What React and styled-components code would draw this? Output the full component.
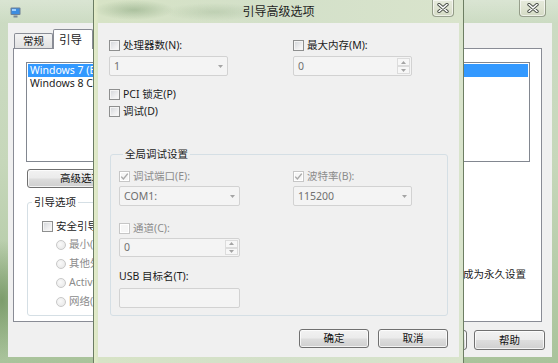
import React from 'react';
import styled, { createGlobalStyle } from 'styled-components';

const GlobalStyle = createGlobalStyle`
  html, body { margin: 0; padding: 0; }
  body {
    width: 558px; height: 363px; overflow: hidden; background: #b7cbae;
    font-family: "Noto Sans", "Noto Sans CJK SC", sans-serif;
  }
  * { box-sizing: border-box; }
`;

const Screen = styled.div`
  position: relative;
  width: 558px;
  height: 363px;
  overflow: hidden;
  font-size: 10.5px;
  line-height: 15px;
  color: #1b1b1b;
`;

/* ---------- back window (系统配置) ---------- */
const MainWindow = styled.div`
  display: flex;
  flex-direction: column;
  width: 558px;
  height: 363px;
  background:
    radial-gradient(ellipse 30px 60px at 2px 300px, rgba(80, 120, 60, 0.55), transparent),
    linear-gradient(180deg, #cddcc4 0%, #c6d7ba 45%, #a9c39b 100%);
`;

const MainTitle = styled.div`
  height: 23px;
  flex: none;
  display: flex;
  align-items: flex-start;
  justify-content: space-between;
  padding: 0 6px 0 10px;
  background: linear-gradient(180deg, rgba(255, 255, 255, 0.25), rgba(255, 255, 255, 0));
`;

const AppIcon = styled.svg`
  margin-top: 7px;
  display: block;
`;

const TitleText = styled.div`
  font-size: 12px;
  line-height: 16px;
  padding-top: 4px;
  color: #1e1e1e;
  white-space: nowrap;
`;

const CloseButton = styled.div`
  justify-self: end;
  width: ${(p) => p.$w}px;
  height: 17px;
  margin-right: ${(p) => p.$mr}px;
  border: 1px solid rgba(90, 100, 80, 0.55);
  border-top: none;
  border-radius: 0 0 4px 4px;
  background: linear-gradient(180deg, #e6eadc 0%, #dfe4d2 50%, #d3dac4 100%);
  box-shadow: inset 0 0 0 1px rgba(255, 255, 255, 0.6);
  display: flex;
  align-items: center;
  justify-content: center;
`;

const MainBody = styled.div`
  flex: 1;
  display: flex;
  padding: 0 6px 6px 8px;
`;

const MainClient = styled.div`
  flex: 1;
  background: #f0f0f0;
  display: flex;
  flex-direction: column;
  padding: 6px 0 0 5px;
`;

const TabStrip = styled.div`
  display: flex;
  align-items: flex-end;
  height: 20px;
  margin-left: 1px;
`;

const Tab = styled.div`
  position: relative;
  z-index: ${(p) => (p.$active ? 2 : 0)};
  width: ${(p) => (p.$active ? 40 : 39)}px;
  height: ${(p) => (p.$active ? 20 : 15)}px;
  margin-bottom: ${(p) => (p.$active ? 0 : 1)}px;
  border: 1px solid #898c95;
  border-bottom: none;
  border-radius: 2px 2px 0 0;
  background: ${(p) => (p.$active ? '#ffffff' : 'linear-gradient(180deg, #f3f3f3, #e2e2e2)')};
  display: flex;
  align-items: center;
  justify-content: ${(p) => (p.$active ? 'flex-start' : 'center')};
  padding-left: ${(p) => (p.$active ? 5 : 0)}px;
  font-size: ${(p) => (p.$active ? 11.5 : 10.5)}px;
`;

const TabPage = styled.div`
  width: 529px;
  height: 274px;
  margin-top: -1px;
  background: #ffffff;
  border: 1px solid #898c95;
  padding: 13px 15px 0 12px;
  display: flex;
  flex-direction: column;
`;

const ListBox = styled.div`
  width: 504px;
  height: 100px;
  border: 1px solid #828790;
  padding: 1px;
  background: #fff;
`;

const ListRow = styled.div`
  height: 13px;
  line-height: 13px;
  padding-left: 2px;
  white-space: nowrap;
  background: ${(p) => (p.$selected ? '#3399ff' : 'transparent')};
  color: ${(p) => (p.$selected ? '#ffffff' : '#1b1b1b')};
`;

const LowerArea = styled.div`
  display: flex;
  justify-content: space-between;
  margin-top: 7px;
`;

const LeftColumn = styled.div`
  display: flex;
  flex-direction: column;
  margin-left: 1px;
`;

const RightColumn = styled.div`
  padding-top: 98px;
`;

const PushButton = styled.div`
  width: ${(p) => p.$w || 70}px;
  height: ${(p) => p.$h || 19}px;
  border: 1px solid #707070;
  border-radius: 3px;
  background: linear-gradient(180deg, #f2f2f2 0%, #ebebeb 48%, #dddddd 52%, #cfcfcf 100%);
  box-shadow: inset 0 0 0 1px rgba(255, 255, 255, 0.75);
  display: flex;
  align-items: center;
  justify-content: center;
  color: #111;
  white-space: nowrap;
`;

const GroupBox = styled.fieldset`
  margin: ${(p) => p.$mt || 0}px 0 0 ${(p) => p.$ml || 0}px;
  padding: ${(p) => p.$pt || 0}px 0 ${(p) => p.$pb || 0}px ${(p) => p.$pl || 0}px;
  width: ${(p) => p.$w}px;
  min-width: 0;
  border: 1px solid #d5dfe5;
  border-radius: 3px;
`;

const Legend = styled.legend`
  margin-left: 4px;
  padding: 0 2px;
  line-height: 15px;
  font-size: 10.5px;
  color: #1b1b1b;
`;

const BootOptions = styled.div`
  display: flex;
  flex-direction: column;
  padding-left: 14px;
`;

const RadioList = styled.div`
  display: flex;
  flex-direction: column;
  padding-left: 14px;
`;

const RadioRow = styled.div`
  display: flex;
  align-items: center;
  gap: 3px;
  height: 19px;
  color: #8c8c8c;
  white-space: nowrap;
`;

const Radio = styled.span`
  width: 10px;
  height: 10px;
  border-radius: 50%;
  border: 1px solid #c8c8c8;
  background: radial-gradient(circle at 40% 40%, #fafafa, #e4e4e4);
  flex: none;
`;

const MainButtons = styled.div`
  display: flex;
  justify-content: flex-end;
  gap: 7px;
  margin-top: 8px;
  padding-right: 7px;
`;

/* ---------- front dialog (引导高级选项) ---------- */
const Dialog = styled.div`
  position: absolute;
  left: 93px;
  top: 0;
  width: 371px;
  height: 363px;
  display: flex;
  flex-direction: column;
  padding: 0 4px 6px;
  border-left: 1px solid rgba(70, 90, 65, 0.75);
  border-right: 1px solid rgba(70, 90, 65, 0.75);
  background:
    radial-gradient(ellipse 40px 10px at 40px 10px, rgba(130, 160, 120, 0.5), transparent),
    radial-gradient(ellipse 50px 9px at 120px 12px, rgba(150, 175, 140, 0.35), transparent),
    linear-gradient(90deg, #e4ecc8 0px, #d7e3c6 5px, #d3e0c9 50%, #d9e4cc 100%);
`;

const DialogTitle = styled.div`
  height: 23px;
  flex: none;
  display: grid;
  grid-template-columns: 1fr auto 1fr;
  align-items: start;
`;

const DialogClient = styled.div`
  flex: 1;
  background: #f0f0f0;
  display: flex;
  flex-direction: column;
  padding: 15px 11px 0 11px;
`;

const TwoCol = styled.div`
  display: grid;
  grid-template-columns: ${(p) => p.$c1}px ${(p) => p.$c2}px;
  column-gap: ${(p) => p.$gap}px;
  row-gap: ${(p) => p.$rg || 0}px;
  margin-top: ${(p) => p.$mt || 0}px;
`;

const CheckRow = styled.div`
  display: flex;
  align-items: center;
  gap: 3px;
  height: ${(p) => p.$h || 15}px;
  margin-top: ${(p) => p.$mt || 0}px;
  color: ${(p) => (p.$disabled ? '#8c8c8c' : '#1b1b1b')};
  white-space: nowrap;
`;

const Box = styled.span`
  width: 11px;
  height: 11px;
  flex: none;
  border: 1px solid ${(p) => (p.$disabled ? '#c6c6c6' : '#8e8f8f')};
  background: ${(p) =>
    p.$disabled ? '#f6f6f6' : 'linear-gradient(135deg, #d2d5d9 0%, #eeeeef 60%, #fbfbfb 100%)'};
  box-shadow: inset 0 0 0 1px ${(p) => (p.$disabled ? '#ffffff' : '#f4f4f4')};
  display: flex;
  align-items: center;
  justify-content: center;
`;

const Field = styled.div`
  display: flex;
  align-items: center;
  height: ${(p) => p.$h || 20}px;
  border: 1px solid #d2d2d2;
  border-radius: 2px;
  background: #f4f4f4;
  color: #707070;
`;

const FieldText = styled.span`
  flex: 1;
  padding-left: 4px;
`;

const DropArrow = styled.span`
  width: 14px;
  display: flex;
  justify-content: center;
`;

const SpinButtons = styled.div`
  display: flex;
  flex-direction: column;
  align-self: stretch;
  width: 13px;
  margin: 1px;
`;

const SpinButton = styled.span`
  flex: 1;
  border: 1px solid #dcdcdc;
  background: #f7f7f7;
  display: flex;
  align-items: center;
  justify-content: center;
`;

const Label = styled.div`
  height: 15px;
  margin-top: ${(p) => p.$mt || 0}px;
  color: #1b1b1b;
`;

const DialogButtons = styled.div`
  display: flex;
  justify-content: flex-end;
  gap: 9px;
  margin-top: 13px;
`;

const Tri = ({ up }) => (
  <svg width="5" height="3" viewBox="0 0 5 3">
    <path d={up ? 'M0 3 L2.5 0 L5 3 Z' : 'M0 0 L5 0 L2.5 3 Z'} fill="#a4a4a4" />
  </svg>
);

const CheckMark = () => (
  <svg width="9" height="9" viewBox="0 0 9 9">
    <path d="M1.2 4.6 L3.4 7 L7.8 1.6" fill="none" stroke="#a9a9a9" strokeWidth="1.4" />
  </svg>
);

const Check = ({ checked, disabled, children, h, mt }) => (
  <CheckRow $disabled={disabled} $h={h} $mt={mt}>
    <Box $disabled={disabled}>{checked && <CheckMark />}</Box>
    <span>{children}</span>
  </CheckRow>
);

const Combo = ({ value, h }) => (
  <Field $h={h}>
    <FieldText>{value}</FieldText>
    <DropArrow>
      <Tri />
    </DropArrow>
  </Field>
);

const Spin = ({ value, h }) => (
  <Field $h={h}>
    <FieldText>{value}</FieldText>
    <SpinButtons>
      <SpinButton>
        <Tri up />
      </SpinButton>
      <SpinButton>
        <Tri />
      </SpinButton>
    </SpinButtons>
  </Field>
);

const CloseGlyph = () => (
  <svg width="12" height="10" viewBox="0 0 12 10">
    <path d="M2 1.5 L10 8.5 M10 1.5 L2 8.5" stroke="#4a4f48" strokeWidth="3.4" strokeLinecap="round" />
    <path d="M2 1.5 L10 8.5 M10 1.5 L2 8.5" stroke="#ffffff" strokeWidth="1.6" strokeLinecap="round" />
  </svg>
);

export default function App() {
  return (
    <Screen>
      <GlobalStyle />
      <MainWindow>
        <MainTitle>
          <AppIcon width="11" height="11" viewBox="0 0 11 11">
            <rect x="0.5" y="0.5" width="10" height="7.5" rx="1" fill="#6f7f94" />
            <rect x="1.5" y="1.5" width="8" height="5.5" fill="#3d8de0" />
            <rect x="2" y="2" width="4" height="2" fill="#9fd0ff" />
            <rect x="3.5" y="8.5" width="4" height="2" fill="#7a8796" />
          </AppIcon>
          <CloseButton $w={27} $mr={6}>
            <CloseGlyph />
          </CloseButton>
        </MainTitle>
        <MainBody>
          <MainClient>
            <TabStrip>
              <Tab>常规</Tab>
              <Tab $active>引导</Tab>
            </TabStrip>
            <TabPage>
              <ListBox>
                <ListRow $selected>Windows 7 (E:\Windows)</ListRow>
                <ListRow>Windows 8 Consumer Preview</ListRow>
              </ListBox>
              <LowerArea>
                <LeftColumn>
                  <PushButton $w={129}>高级选项(V)...</PushButton>
                  <GroupBox $w={270} $mt={7} $pt={8} $pb={4}>
                    <Legend>引导选项</Legend>
                    <BootOptions>
                      <Check h={17}>安全引导(F)</Check>
                      <RadioList>
                        <RadioRow><Radio />最小(M)</RadioRow>
                        <RadioRow><Radio />其他外壳(L)</RadioRow>
                        <RadioRow><Radio />Active Directory 修复(P)</RadioRow>
                        <RadioRow><Radio />网络(W)</RadioRow>
                      </RadioList>
                    </BootOptions>
                  </GroupBox>
                </LeftColumn>
                <RightColumn>
                  <Check>使所有引导设置成为永久设置</Check>
                </RightColumn>
              </LowerArea>
            </TabPage>
            <MainButtons>
              <PushButton $h={20}>应用(A)</PushButton>
              <PushButton $h={20} $w={71}>帮助</PushButton>
            </MainButtons>
          </MainClient>
        </MainBody>
      </MainWindow>

      <Dialog>
        <DialogTitle>
          <span />
          <TitleText>引导高级选项</TitleText>
          <CloseButton $w={22} $mr={5}>
            <CloseGlyph />
          </CloseButton>
        </DialogTitle>
        <DialogClient>
          <TwoCol $c1={119} $c2={119} $gap={65} $rg={3}>
            <Check>处理器数(N):</Check>
            <Check>最大内存(M):</Check>
            <Combo value="1" />
            <Spin value="0" />
          </TwoCol>
          <Check h={17} mt={10}>PCI 锁定(P)</Check>
          <Check h={17}>调试(D)</Check>
          <GroupBox $w={338} $ml={1} $mt={27} $pt={7} $pb={7} $pl={8}>
            <Legend>全局调试设置</Legend>
            <TwoCol $c1={121} $c2={119} $gap={53} $rg={2}>
              <Check checked disabled>调试端口(E):</Check>
              <Check checked disabled>波特率(B):</Check>
              <Combo value="COM1:" />
              <Combo value="115200" />
            </TwoCol>
            <TwoCol $c1={121} $c2={119} $gap={53} $rg={2} $mt={15}>
              <Check disabled>通道(C):</Check>
              <span />
              <Spin value="0" h={19} />
            </TwoCol>
            <Label $mt={12}>USB 目标名(T):</Label>
            <TwoCol $c1={121} $c2={119} $gap={53} $mt={4}>
              <Field />
            </TwoCol>
          </GroupBox>
          <DialogButtons>
            <PushButton>确定</PushButton>
            <PushButton>取消</PushButton>
          </DialogButtons>
        </DialogClient>
      </Dialog>
    </Screen>
  );
}
